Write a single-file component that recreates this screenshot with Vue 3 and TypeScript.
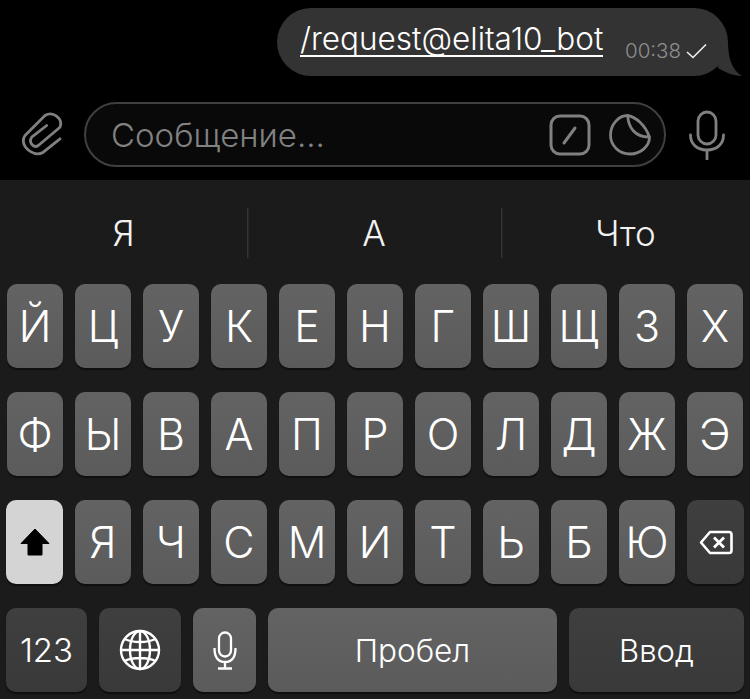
<script setup lang="ts">
const suggestions: string[] = ['Я', 'А', 'Что']
const topRow: string[] = ['Й', 'Ц', 'У', 'К', 'Е', 'Н', 'Г', 'Ш', 'Щ', 'З', 'Х']
const midRow: string[] = ['Ф', 'Ы', 'В', 'А', 'П', 'Р', 'О', 'Л', 'Д', 'Ж', 'Э']
const lowRow: string[] = ['Я', 'Ч', 'С', 'М', 'И', 'Т', 'Ь', 'Б', 'Ю']
</script>

<template>
  <div class="screen">
    <div class="chat">
      <div class="bubble">
        <span class="command">/request@elita10_bot</span>
        <span class="meta">
          <span class="time">00:38</span>
          <svg class="check" width="21" height="16" viewBox="0 0 21 16" fill="none">
            <path d="M1 9l6 5.500L20 1.500" stroke="#f0f0f0" stroke-width="1.600" />
          </svg>
        </span>
        <svg class="tail" width="30" height="38" viewBox="0 0 30 38">
          <path d="M10 0L16 4C16 20 20 32 30 38C23 38 14 35 6 30Z" fill="#333" />
        </svg>
      </div>
    </div>

    <div class="composer">
      <svg class="clip" width="46" height="50" viewBox="0 0 46 50" fill="none">
        <path
          d="M40 28.800L23.300 42.200C15 47.200 3.300 38.800 3.300 30.500C3.300 28.500 4 27 5 25.500L25 5.500C33.300 0.500 43.300 8.800 40 17.200L18.300 35.500C13.300 38.800 8.300 32.200 11.700 27.200L26.700 15.500"
          stroke="#808080"
          stroke-width="2.800"
          stroke-linecap="round"
          stroke-linejoin="round"
        />
      </svg>
      <div class="field">
        <span class="placeholder">Сообщение...</span>
        <svg class="slash" width="42" height="42" viewBox="0 0 42 42" fill="none">
          <rect x="2" y="2" width="38" height="38" rx="9" stroke="#808080" stroke-width="3" />
          <path d="M15 29L26 14" stroke="#808080" stroke-width="3" stroke-linecap="round" />
        </svg>
        <svg class="sticker" width="42" height="42" viewBox="0 0 42 42" fill="none">
          <path
            d="M18.800 1.500C27 3 36 11 40.500 23C40.500 32 32 40 21 40C10 40 1.500 31.500 1.500 21C1.500 10.500 9.500 1.500 18.800 1.500C19 13 26 23.500 40.500 23"
            stroke="#808080"
            stroke-width="2.800"
            stroke-linejoin="round"
          />
        </svg>
      </div>
      <svg class="mic-big" width="36" height="50" viewBox="0 0 36 50" fill="none">
        <rect x="9" y="2" width="18" height="32" rx="9" stroke="#808080" stroke-width="2.800" />
        <path d="M1.500 25C1.500 34 8 40 18 40C28 40 34.500 34 34.500 25M18 40V49" stroke="#808080" stroke-width="2.800" stroke-linecap="round" />
      </svg>
    </div>

    <div class="keyboard">
      <div class="suggestions">
        <div v-for="word in suggestions" :key="word" class="suggestion">{{ word }}</div>
      </div>
      <div class="rows">
        <div class="row inset">
          <div v-for="k in topRow" :key="k" class="key">{{ k }}</div>
        </div>
        <div class="row inset">
          <div v-for="k in midRow" :key="k" class="key">{{ k }}</div>
        </div>
        <div class="row">
          <div class="key fixed shift">
            <svg width="30" height="28" viewBox="0 0 30 28">
              <path d="M15 1L29 15.500H22V27H8V15.500H1Z" fill="#000" stroke="#000" stroke-linejoin="round" />
            </svg>
          </div>
          <div v-for="k in lowRow" :key="k" class="key">{{ k }}</div>
          <div class="key fixed dark">
            <svg width="34" height="25" viewBox="0 0 34 25" fill="none">
              <path
                d="M11 2H30C31.500 2 32.500 3 32.500 4.500V20.500C32.500 22 31.500 23 30 23H11L2 12.500Z"
                stroke="#fff"
                stroke-width="2.600"
                stroke-linejoin="round"
              />
              <path d="M15 7.500L25 17.500M25 7.500L15 17.500" stroke="#fff" stroke-width="2.800" />
            </svg>
          </div>
        </div>
        <div class="row">
          <div class="key dark num">123</div>
          <div class="key dark globe">
            <svg width="42" height="42" viewBox="0 0 42 42" fill="none" stroke="#fff" stroke-width="2.400">
              <circle cx="21" cy="21" r="19" />
              <ellipse cx="21" cy="21" rx="10" ry="19" />
              <path d="M21 2V40M2 21H40M5.500 10C14 14 28 14 36.500 10M5.500 32C14 28 28 28 36.500 32" />
            </svg>
          </div>
          <div class="key mic">
            <svg width="24" height="39" viewBox="0 0 24 39" fill="none" stroke="#fff" stroke-width="2.300">
              <rect x="6" y="1.500" width="12" height="24" rx="6" />
              <path d="M1.500 17C1.500 26 5 31 12 31C19 31 22.500 26 22.500 17M12 31V37M5 37.500H19" />
            </svg>
          </div>
          <div class="key space">Пробел</div>
          <div class="key dark enter">Ввод</div>
        </div>
      </div>
    </div>
  </div>
</template>

<style scoped>
.screen {
  width: 750px;
  height: 699px;
  background: #000;
  display: flex;
  flex-direction: column;
  overflow: hidden;
  font-family: Inter, "Liberation Sans", sans-serif;
}

.chat {
  display: flex;
  justify-content: flex-end;
  padding: 8px 22px 0 0;
}

.bubble {
  position: relative;
  width: 451px;
  height: 68px;
  box-sizing: border-box;
  padding: 12px 0 0 23px;
  background: #333;
  border-radius: 34px;
  display: flex;
  color: #fff;
}

.command {
  font-size: 31.500px;
  font-weight: 300;
  line-height: 38px;
  height: 35px;
  border-bottom: 2px solid #fff;
  white-space: nowrap;
}

.meta {
  display: flex;
  align-items: center;
  gap: 5px;
  position: absolute;
  left: 348px;
  top: 31px;
}

.time {
  font-size: 20.500px;
  font-weight: 300;
  line-height: 24px;
  color: #8e8e8e;
}

.tail {
  position: absolute;
  left: 435px;
  top: 30px;
}

.composer {
  display: flex;
  align-items: center;
  height: 65px;
  margin-top: 26px;
  padding-left: 20px;
}

.clip {
  flex: none;
  margin-right: 18px;
}

.field {
  flex: none;
  width: 582px;
  height: 65px;
  box-sizing: border-box;
  border: 2px solid #404040;
  border-radius: 33px;
  background: #090909;
  display: flex;
  align-items: center;
  padding: 0 13px 0 25px;
}

.placeholder {
  flex: 1;
  font-size: 33px;
  font-weight: 300;
  color: #828282;
}

.sticker {
  margin-left: 18px;
}

.mic-big {
  flex: none;
  margin-left: 23px;
}

.keyboard {
  flex: 1;
  margin-top: 13px;
  background: #1b1b1b;
}

.suggestions {
  display: grid;
  grid-template-columns: 247px 254px 249px;
  height: 104px;
  align-items: center;
}

.suggestion {
  height: 50px;
  margin-top: 2px;
  display: flex;
  align-items: center;
  justify-content: center;
  font-size: 35px;
  font-weight: 300;
  color: #f2f2f2;
  box-shadow: 1.500px 0 0 #333;
}

.suggestion:last-child {
  box-shadow: none;
}

.rows {
  display: flex;
  flex-direction: column;
  gap: 24px;
  padding: 0 6px;
}

.row {
  display: flex;
  gap: 12px;
  height: 84px;
}

.inset {
  padding: 0 1px;
}

.key {
  flex: 1 1 0;
  min-width: 0;
  display: flex;
  align-items: center;
  justify-content: center;
  border-radius: 10px;
  background: linear-gradient(#636363, #5b5b5b);
  box-shadow: 0 2px 1px #0f0f0f;
  color: #fff;
  font-size: 43px;
  font-weight: 300;
}

.fixed {
  flex: 0 0 57px;
}

.shift {
  background: #d4d4d4;
}

.dark {
  background: linear-gradient(#3f3f3f, #393939);
}

.num {
  flex: 0 0 81px;
  font-size: 33px;
}

.globe {
  flex: 0 0 82px;
}

.mic {
  flex: 0 0 63px;
}

.space {
  flex: 0 0 289px;
  font-size: 31.500px;
}

.enter {
  flex: 0 0 175px;
  font-size: 31px;
}
</style>
